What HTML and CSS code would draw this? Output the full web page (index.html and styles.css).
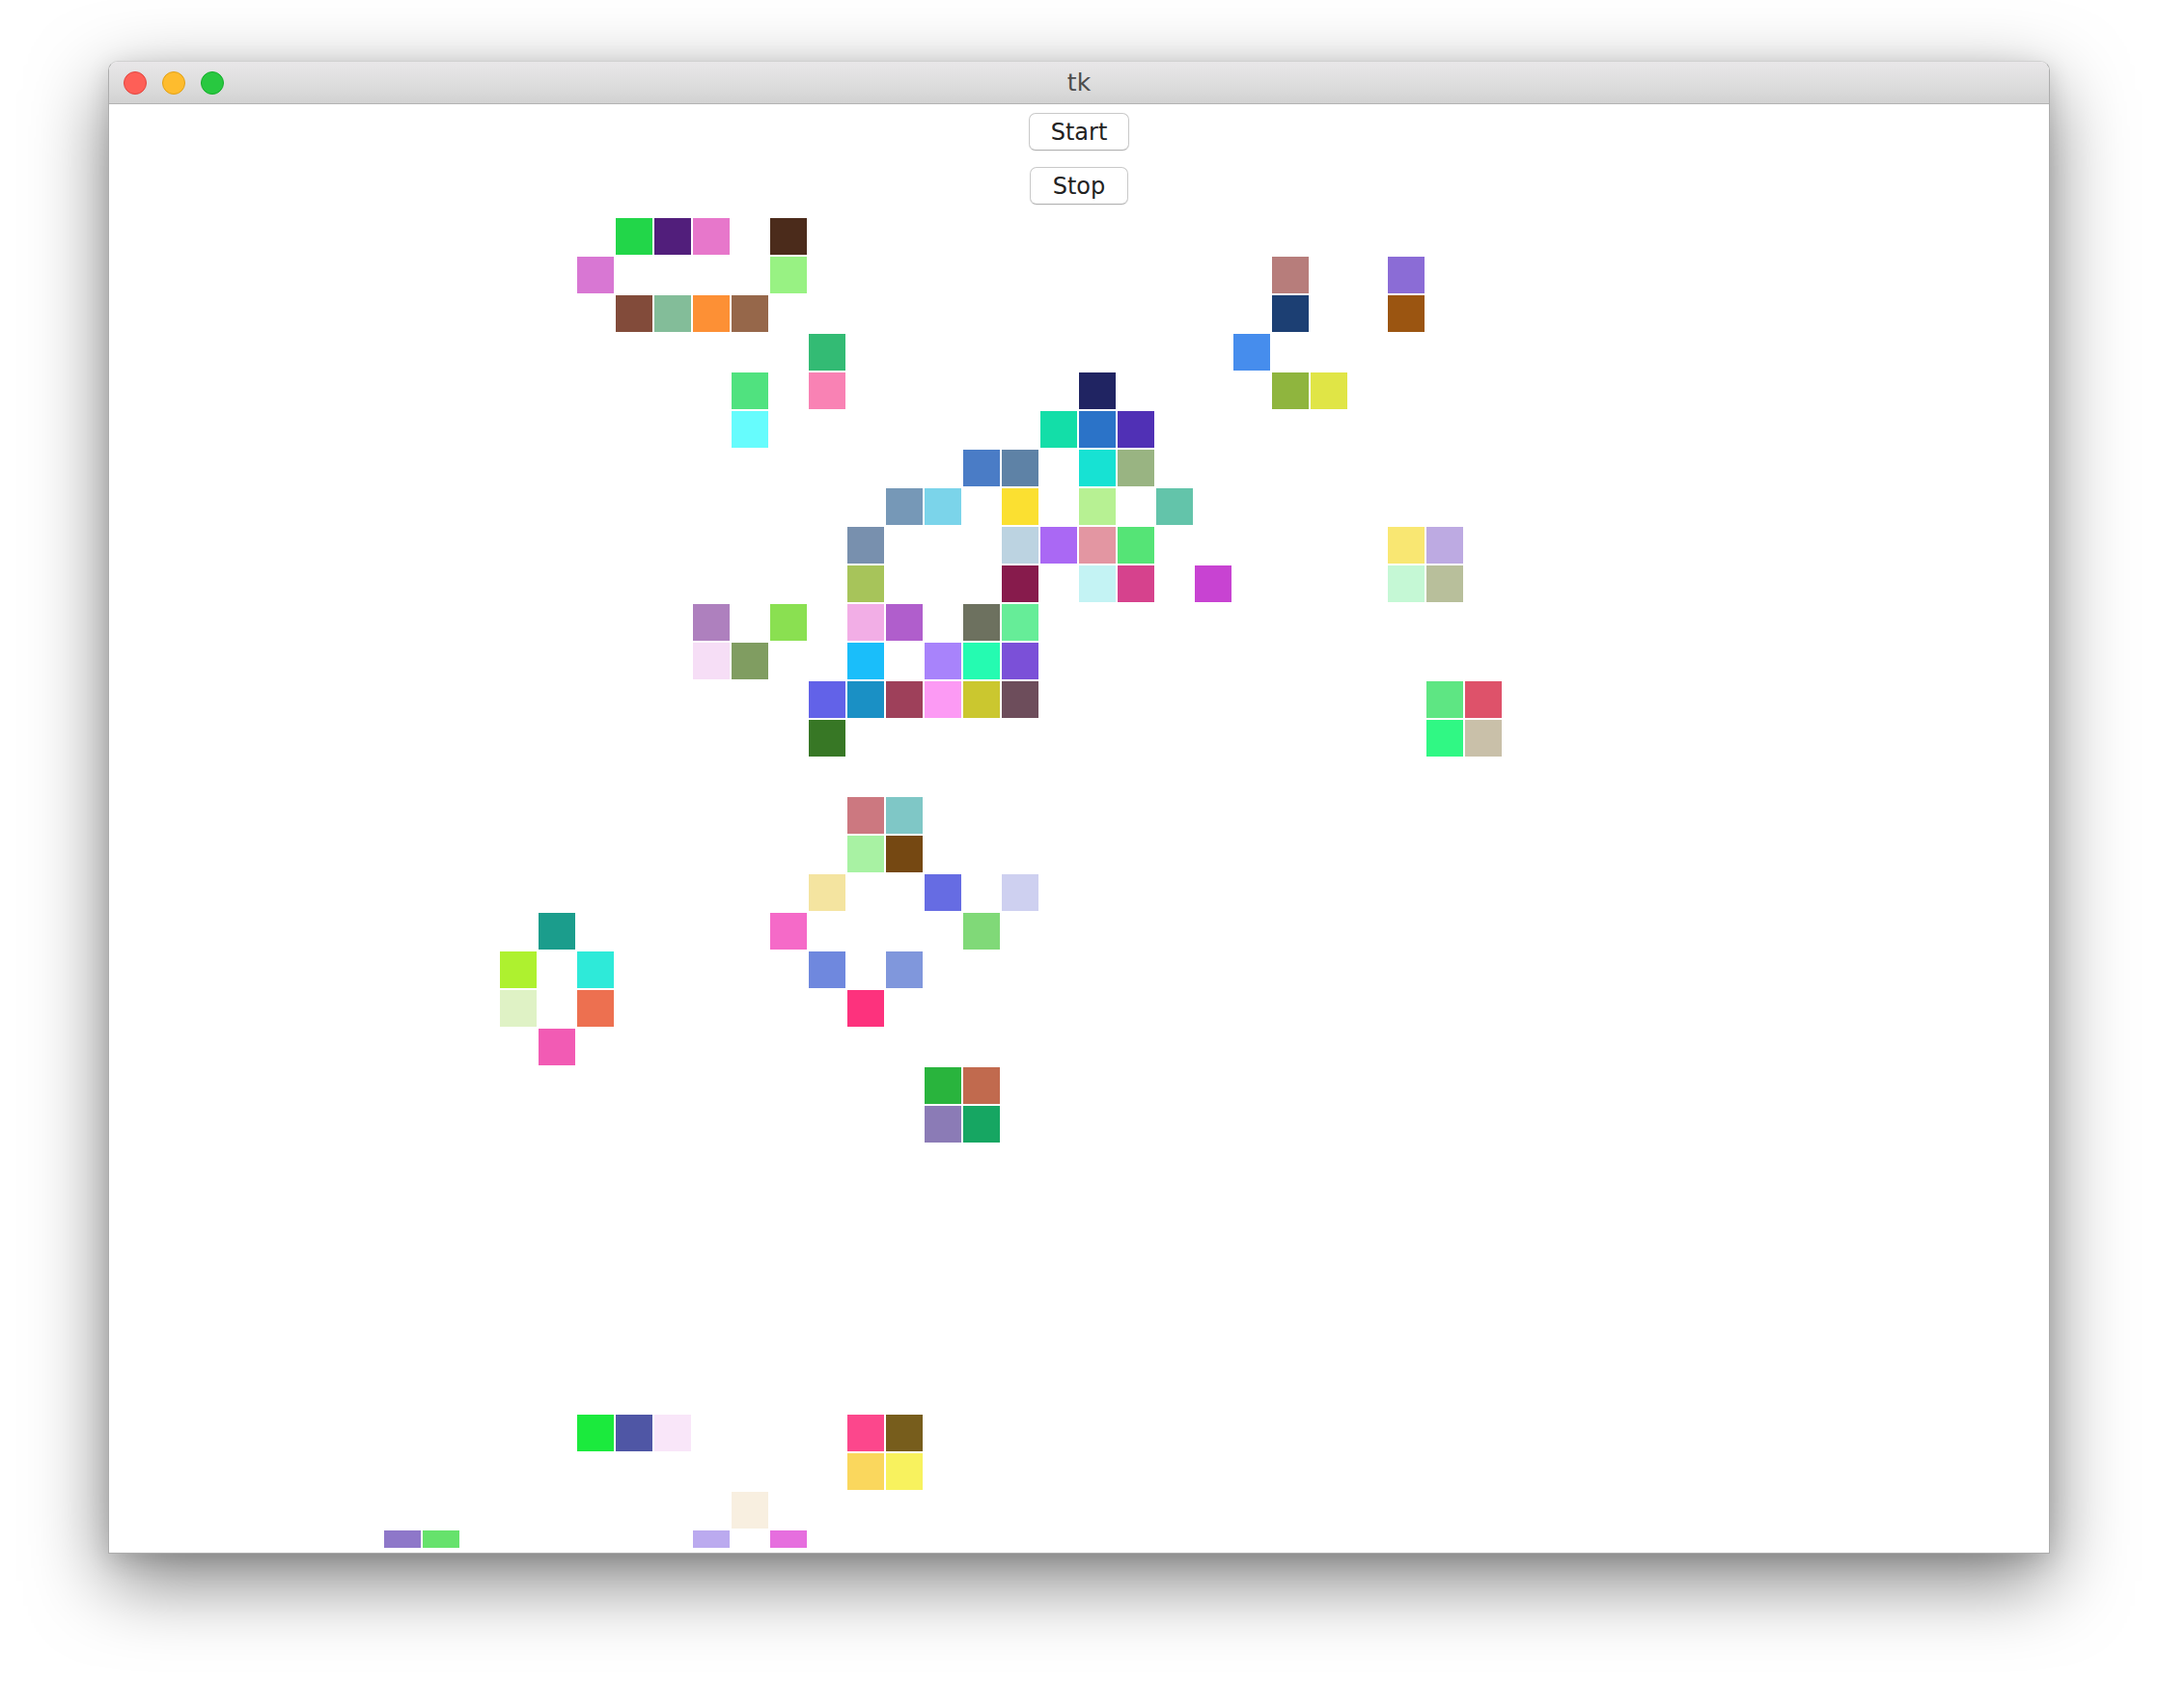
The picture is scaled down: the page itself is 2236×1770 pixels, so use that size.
FILE: index.html
```html
<!DOCTYPE html>
<html>
<head>
<meta charset="utf-8">
<title>tk</title>
<link rel="stylesheet" href="styles.css">
</head>
<body>
<div class="window">
  <div class="titlebar">
    <div class="lights">
      <span class="light red"></span>
      <span class="light yellow"></span>
      <span class="light green"></span>
    </div>
    <div class="title">tk</div>
  </div>
  <div class="content">
    <button class="btn btn-start">Start</button>
    <button class="btn btn-stop">Stop</button>
    <div class="canvas-wrap">
      <div class="canvas">
        <div class="cell" style="grid-area:1/7;background:#22d649"></div>
        <div class="cell" style="grid-area:1/8;background:#511e7b"></div>
        <div class="cell" style="grid-area:1/9;background:#e777cb"></div>
        <div class="cell" style="grid-area:1/11;background:#4b2b1b"></div>
        <div class="cell" style="grid-area:2/6;background:#d877d3"></div>
        <div class="cell" style="grid-area:2/11;background:#98f283"></div>
        <div class="cell" style="grid-area:2/24;background:#b77d7b"></div>
        <div class="cell" style="grid-area:2/27;background:#8b6cd6"></div>
        <div class="cell" style="grid-area:3/7;background:#824b3a"></div>
        <div class="cell" style="grid-area:3/8;background:#83bd99"></div>
        <div class="cell" style="grid-area:3/9;background:#fd9035"></div>
        <div class="cell" style="grid-area:3/10;background:#96674a"></div>
        <div class="cell" style="grid-area:3/24;background:#1c3f73"></div>
        <div class="cell" style="grid-area:3/27;background:#9b5511"></div>
        <div class="cell" style="grid-area:4/12;background:#33bb74"></div>
        <div class="cell" style="grid-area:4/23;background:#468ded"></div>
        <div class="cell" style="grid-area:5/10;background:#50e27f"></div>
        <div class="cell" style="grid-area:5/12;background:#f982b4"></div>
        <div class="cell" style="grid-area:5/19;background:#202462"></div>
        <div class="cell" style="grid-area:5/24;background:#8fb53e"></div>
        <div class="cell" style="grid-area:5/25;background:#e0e546"></div>
        <div class="cell" style="grid-area:6/10;background:#66fcfd"></div>
        <div class="cell" style="grid-area:6/18;background:#13dea8"></div>
        <div class="cell" style="grid-area:6/19;background:#2b73c8"></div>
        <div class="cell" style="grid-area:6/20;background:#5030b5"></div>
        <div class="cell" style="grid-area:7/16;background:#4a7cc6"></div>
        <div class="cell" style="grid-area:7/17;background:#5e82a6"></div>
        <div class="cell" style="grid-area:7/19;background:#17e2d3"></div>
        <div class="cell" style="grid-area:7/20;background:#99b482"></div>
        <div class="cell" style="grid-area:8/14;background:#7698b7"></div>
        <div class="cell" style="grid-area:8/15;background:#7bd4ea"></div>
        <div class="cell" style="grid-area:8/17;background:#fbe031"></div>
        <div class="cell" style="grid-area:8/19;background:#b7f193"></div>
        <div class="cell" style="grid-area:8/21;background:#63c4aa"></div>
        <div class="cell" style="grid-area:9/13;background:#7890ae"></div>
        <div class="cell" style="grid-area:9/17;background:#bcd3e1"></div>
        <div class="cell" style="grid-area:9/18;background:#aa68f4"></div>
        <div class="cell" style="grid-area:9/19;background:#e396a2"></div>
        <div class="cell" style="grid-area:9/20;background:#55e476"></div>
        <div class="cell" style="grid-area:9/27;background:#f9e772"></div>
        <div class="cell" style="grid-area:9/28;background:#bdaae2"></div>
        <div class="cell" style="grid-area:10/13;background:#a7c45a"></div>
        <div class="cell" style="grid-area:10/17;background:#871b4c"></div>
        <div class="cell" style="grid-area:10/19;background:#c4f3f4"></div>
        <div class="cell" style="grid-area:10/20;background:#d6428d"></div>
        <div class="cell" style="grid-area:10/22;background:#c843d2"></div>
        <div class="cell" style="grid-area:10/27;background:#c5f8d5"></div>
        <div class="cell" style="grid-area:10/28;background:#b8bf9b"></div>
        <div class="cell" style="grid-area:11/9;background:#ae80be"></div>
        <div class="cell" style="grid-area:11/11;background:#8ae051"></div>
        <div class="cell" style="grid-area:11/13;background:#f2aee6"></div>
        <div class="cell" style="grid-area:11/14;background:#b05ecc"></div>
        <div class="cell" style="grid-area:11/16;background:#6d715f"></div>
        <div class="cell" style="grid-area:11/17;background:#66ed98"></div>
        <div class="cell" style="grid-area:12/9;background:#f6def6"></div>
        <div class="cell" style="grid-area:12/10;background:#809d61"></div>
        <div class="cell" style="grid-area:12/13;background:#1abefa"></div>
        <div class="cell" style="grid-area:12/15;background:#a883fb"></div>
        <div class="cell" style="grid-area:12/16;background:#25fbb1"></div>
        <div class="cell" style="grid-area:12/17;background:#7b50d8"></div>
        <div class="cell" style="grid-area:13/12;background:#6262e8"></div>
        <div class="cell" style="grid-area:13/13;background:#1a90c5"></div>
        <div class="cell" style="grid-area:13/14;background:#9e405a"></div>
        <div class="cell" style="grid-area:13/15;background:#fc9af4"></div>
        <div class="cell" style="grid-area:13/16;background:#cbc72f"></div>
        <div class="cell" style="grid-area:13/17;background:#6d4d5b"></div>
        <div class="cell" style="grid-area:13/28;background:#5ee683"></div>
        <div class="cell" style="grid-area:13/29;background:#de526a"></div>
        <div class="cell" style="grid-area:14/12;background:#377725"></div>
        <div class="cell" style="grid-area:14/28;background:#30f884"></div>
        <div class="cell" style="grid-area:14/29;background:#c9c0a9"></div>
        <div class="cell" style="grid-area:16/13;background:#cc7880"></div>
        <div class="cell" style="grid-area:16/14;background:#7fc7c6"></div>
        <div class="cell" style="grid-area:17/13;background:#a8f2a3"></div>
        <div class="cell" style="grid-area:17/14;background:#754812"></div>
        <div class="cell" style="grid-area:18/12;background:#f4e4a0"></div>
        <div class="cell" style="grid-area:18/15;background:#666ce3"></div>
        <div class="cell" style="grid-area:18/17;background:#ced0f0"></div>
        <div class="cell" style="grid-area:19/5;background:#1b9d8c"></div>
        <div class="cell" style="grid-area:19/11;background:#f56ac8"></div>
        <div class="cell" style="grid-area:19/16;background:#80d978"></div>
        <div class="cell" style="grid-area:20/4;background:#aef12f"></div>
        <div class="cell" style="grid-area:20/6;background:#2eead9"></div>
        <div class="cell" style="grid-area:20/12;background:#6f88de"></div>
        <div class="cell" style="grid-area:20/14;background:#8097dc"></div>
        <div class="cell" style="grid-area:21/4;background:#dff2c5"></div>
        <div class="cell" style="grid-area:21/6;background:#ed7050"></div>
        <div class="cell" style="grid-area:21/13;background:#fd327d"></div>
        <div class="cell" style="grid-area:22/5;background:#f25bb4"></div>
        <div class="cell" style="grid-area:23/15;background:#29b43d"></div>
        <div class="cell" style="grid-area:23/16;background:#c16a4e"></div>
        <div class="cell" style="grid-area:24/15;background:#8b7bb6"></div>
        <div class="cell" style="grid-area:24/16;background:#16a662"></div>
        <div class="cell" style="grid-area:32/6;background:#1bea3d"></div>
        <div class="cell" style="grid-area:32/7;background:#4f56a5"></div>
        <div class="cell" style="grid-area:32/8;background:#f9e6f9"></div>
        <div class="cell" style="grid-area:32/13;background:#fc478c"></div>
        <div class="cell" style="grid-area:32/14;background:#775d1c"></div>
        <div class="cell" style="grid-area:33/13;background:#fad75d"></div>
        <div class="cell" style="grid-area:33/14;background:#f8f25e"></div>
        <div class="cell" style="grid-area:34/10;background:#f8efe0"></div>
        <div class="cell" style="grid-area:35/1;background:#8e77c9"></div>
        <div class="cell" style="grid-area:35/2;background:#66e26c"></div>
        <div class="cell" style="grid-area:35/9;background:#bbaaef"></div>
        <div class="cell" style="grid-area:35/11;background:#e66ede"></div>
      </div>
    </div>
  </div>
</div>
</body>
</html>
```
FILE: styles.css
```css
html, body {
  margin: 0;
  padding: 0;
  background: #ffffff;
}

body {
  padding: 63px 0 0 112px;
  height: 1770px;
  box-sizing: border-box;
  overflow: hidden;
}

.window {
  width: 2012px;
  height: 1547px;
  box-sizing: border-box;
  border: 1px solid rgba(0, 0, 0, 0.32);
  border-top-color: rgba(0, 0, 0, 0.18);
  border-radius: 10px 10px 0 0;
  background: #ffffff;
  box-shadow: 0 28px 80px rgba(0, 0, 0, 0.5), 0 6px 24px rgba(0, 0, 0, 0.12);
  display: flex;
  flex-direction: column;
  overflow: hidden;
}

.titlebar {
  height: 43px;
  flex: none;
  background: linear-gradient(to bottom, #e9e7e9 0%, #dcdcdc 60%, #d2d2d2 100%);
  border-bottom: 1px solid #b3b3b3;
  display: flex;
  align-items: center;
  position: relative;
}

.lights {
  display: flex;
  gap: 16px;
  padding-left: 15px;
}

.light {
  width: 24px;
  height: 24px;
  border-radius: 50%;
  box-sizing: border-box;
}

.red { background: #fe5f57; border: 1px solid #e2463f; }
.yellow { background: #febc2e; border: 1px solid #e1a116; }
.green { background: #28c840; border: 1px solid #14ae2a; }

.title {
  position: absolute;
  left: 0;
  right: 0;
  top: 0;
  bottom: 0;
  display: flex;
  align-items: center;
  justify-content: center;
  font-family: "DejaVu Sans", "Liberation Sans", sans-serif;
  font-size: 25px;
  color: #4d4d4d;
}

.content {
  flex: 1;
  display: flex;
  flex-direction: column;
  align-items: center;
  overflow: hidden;
}

.btn {
  height: 39px;
  box-sizing: border-box;
  background: #ffffff;
  border: 1px solid #c9c9c9;
  border-bottom-color: #b2b2b2;
  border-radius: 7px;
  box-shadow: 0 1px 1px rgba(0, 0, 0, 0.06);
  font-family: "DejaVu Sans", "Liberation Sans", sans-serif;
  font-size: 24px;
  color: #222222;
  padding: 0;
  line-height: 36px;
}

.btn-start {
  width: 104px;
  margin-top: 9px;
}

.btn-stop {
  width: 102px;
  margin-top: 17px;
}

.canvas-wrap {
  align-self: stretch;
  margin-top: 14px;
  height: 1378px;
  overflow: hidden;
  padding-left: 285px;
}

.canvas {
  display: grid;
  grid-template-columns: repeat(29, 38px);
  grid-template-rows: repeat(35, 38px);
  gap: 2px;
}

.cell {
  width: 38px;
  height: 38px;
}
```
